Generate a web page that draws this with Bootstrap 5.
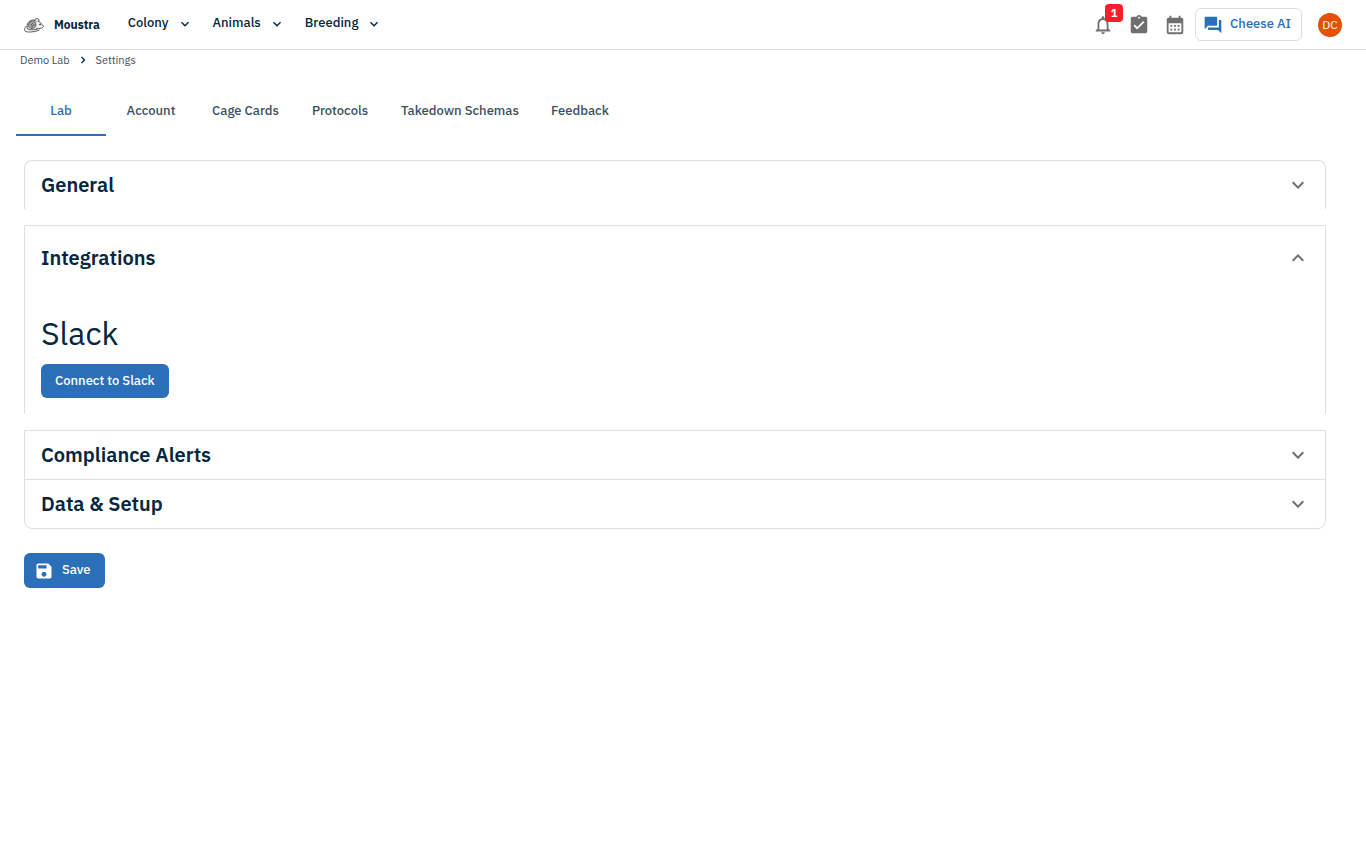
<!DOCTYPE html>
<html lang="en">
<head>
<meta charset="utf-8">
<meta name="viewport" content="width=device-width, initial-scale=1">
<title>Moustra – Settings</title>
<link href="https://cdn.jsdelivr.net/npm/bootstrap@5.3.0/dist/css/bootstrap.min.css" rel="stylesheet">
<style>
  :root { --ink: #05263f; --ink-soft: #3a4f62; --brand: #2a6fb7; --line: #dcdfe3; --icon: #6f6f6f; }
  body { font-family: "IBM Plex Sans", "Noto Sans", sans-serif; font-size: 13px; line-height: 20px; color: var(--ink); background: #fff; }
  svg { display: block; flex: none; }
  .topbar { height: 50px; border-bottom: 1px solid #dcdcdc; }
  .brand-link { gap: 10px; margin-right: 28px; }
  .brand-name { font-size: 12px; font-weight: 700; color: var(--ink); }
  .menus { gap: 20px; }
  .menu-btn { font-size: 13px; font-weight: 500; line-height: 20px; color: var(--ink); gap: 8px; }
  .menu-btn svg { margin-top: 2px; }
  .tool-btn { color: var(--icon); width: 36px; height: 36px; }
  .count-badge { top: -3px; left: 20px; width: 18px; height: 18px; border-radius: 4px; background: #fa1e2d; color: #fff; font-size: 11px; font-weight: 700; line-height: 18px; }
  .ai-btn { height: 33px; border: 1px solid #d8dee5; border-radius: 6px; color: var(--brand); font-size: 13px; line-height: 20px; font-weight: 500; padding: 0 10px 2px 7px; gap: 7px; margin: 0 16px 0 2px; }
  .ai-btn svg { margin-top: 2px; }
  .user-dot { width: 24px; height: 24px; background: #e65100; color: #fff; font-size: 12px; }
  .crumbs { font-size: 11px; line-height: 20px; padding: 0 20px; gap: 8px; }
  .crumbs a { color: var(--ink-soft); }
  .settings-tabs { padding: 0 16px; margin-top: 16px; }
  .settings-tabs .nav-link { min-width: 90px; height: 50px; padding: 2px 16px 0; font-weight: 500; color: var(--ink-soft); background: none; border: 0; border-bottom: 2px solid transparent; }
  .settings-tabs .nav-link.active { color: var(--brand); border-bottom-color: var(--brand); }
  .content-area { padding: 24px 40px 24px 24px; }
  .panel { border: 1px solid var(--line); border-bottom: 0; }
  .panel:first-child { border-radius: 8px 8px 0 0; margin-bottom: 16px; }
  .panel:last-child { border-bottom: 1px solid var(--line); border-radius: 0 0 8px 8px; }
  .panel.opened { margin-bottom: 16px; }
  .panel-toggle { min-height: 48px; padding: 0 15px 0 16px; font-size: 20px; line-height: 30px; font-weight: 600; color: var(--ink); }
  .panel-toggle svg { color: var(--icon); }
  .opened .panel-toggle { min-height: 64px; }
  .panel-content { padding: 24px 16px 16px; }
  .panel-content h3 { font-size: 32px; line-height: 38px; font-weight: 400; margin-bottom: 12px; }
  .solid-btn { background: var(--brand); color: #fff; border-radius: 6px; font-size: 13px; font-weight: 500; line-height: 20px; height: 34px; padding: 0 14px; }
  .save-btn { height: 35px; padding: 0 14px 2px 10px; gap: 8px; margin-top: 24px; }
  .save-btn svg { margin-top: 3px; }
</style>
</head>
<body>
<svg class="d-none">
  <symbol id="chev" viewBox="0 0 24 24"><path d="M7.41 8.59 12 13.17l4.59-4.58L18 10l-6 6-6-6z"/></symbol>
</svg>
<header class="topbar d-flex align-items-center px-4">
  <a href="#" class="brand-link d-flex align-items-center text-decoration-none">
    <svg width="20" height="18" viewBox="0 0 40 36" fill="none" stroke="#4a4a4a" stroke-width="1.800">
      <path fill="#f4f4f4" d="M7 26C4 16 10 8 18 8c3 0 5 1 7 3 5-1 10 3 14 10-1 3-5 4-9 4-6 3-15 4-23 1z"/>
      <path fill="#a8a8a8" stroke="#555" d="M9 19c0-6 4-9 8-9 4 0 7 3 7 8 0 4-3 7-8 7-4 0-7-2-7-6z"/>
      <path d="M14 18c0-3 5-4 6-1 0 3-4 5-6 3"/>
      <path fill="#ddd" d="M22 10c0-4 2-6 5-5s4 4 2 7"/>
      <path d="M5 20C-2 27 1 32 9 32c9 0 15-1 22-4M23 27l4-3"/>
      <circle cx="32" cy="17" r="1.200" fill="#222"/>
    </svg>
    <span class="brand-name">Moustra</span>
  </a>
  <nav class="menus d-flex align-items-center pb-1">
    <button class="menu-btn btn border-0 p-0 d-flex align-items-center" type="button">Colony <svg width="16" height="16" fill="currentColor"><use href="#chev"/></svg></button>
    <button class="menu-btn btn border-0 p-0 d-flex align-items-center" type="button">Animals <svg width="16" height="16" fill="currentColor"><use href="#chev"/></svg></button>
    <button class="menu-btn btn border-0 p-0 d-flex align-items-center" type="button">Breeding <svg width="16" height="16" fill="currentColor"><use href="#chev"/></svg></button>
  </nav>
  <div class="ms-auto d-flex align-items-center">
    <button class="tool-btn btn border-0 p-0 d-flex align-items-center justify-content-center position-relative" type="button" aria-label="Notifications">
      <svg width="22" height="22" viewBox="0 0 24 24" fill="currentColor"><path d="M12 22c1.100 0 2-.9 2-2h-4c0 1.100.9 2 2 2m6-6v-5c0-3.070-1.630-5.640-4.500-6.320V4c0-.83-.67-1.500-1.500-1.500s-1.500.67-1.500 1.500v.68C7.640 5.360 6 7.920 6 11v5l-2 2v1h16v-1zm-2 1H8v-6c0-2.480 1.510-4.500 4-4.500s4 2.020 4 4.500z"/></svg>
      <span class="count-badge position-absolute text-center">1</span>
    </button>
    <button class="tool-btn btn border-0 p-0 d-flex align-items-center justify-content-center" type="button" aria-label="Tasks">
      <svg width="22" height="22" viewBox="0 0 24 24" fill="currentColor"><path d="M19 3h-4.180C14.400 1.840 13.300 1 12 1s-2.400.84-2.820 2H5c-1.100 0-2 .9-2 2v14c0 1.100.9 2 2 2h14c1.100 0 2-.9 2-2V5c0-1.100-.9-2-2-2m-7 0c.55 0 1 .45 1 1s-.45 1-1 1-1-.45-1-1 .45-1 1-1m-2 14-4-4 1.410-1.410L10 14.170l6.590-6.590L18 9z"/></svg>
    </button>
    <button class="tool-btn btn border-0 p-0 d-flex align-items-center justify-content-center" type="button" aria-label="Calendar">
      <svg width="22" height="22" viewBox="0 0 24 24" fill="currentColor"><path fill-rule="evenodd" d="M19 4h-1V2h-2v2H8V2H6v2H5c-1.100 0-2 .9-2 2v14c0 1.100.9 2 2 2h14c1.100 0 2-.9 2-2V6c0-1.100-.9-2-2-2m0 16H5V10h14zM7 12h2v2H7zm4 0h2v2h-2zm4 0h2v2h-2zm-8 4h2v2H7zm4 0h2v2h-2zm4 0h2v2h-2z"/></svg>
    </button>
    <button class="ai-btn btn d-flex align-items-center" type="button">
      <svg width="20" height="20" viewBox="0 0 24 24" fill="currentColor"><path d="M21 6h-2v9H6v2c0 .55.45 1 1 1h11l4 4V7c0-.55-.45-1-1-1m-4 6V3c0-.55-.45-1-1-1H3c-.55 0-1 .45-1 1v14l4-4h10c.55 0 1-.45 1-1"/></svg>
      Cheese AI
    </button>
    <button class="user-dot btn border-0 p-0 rounded-circle d-flex align-items-center justify-content-center" type="button">DC</button>
  </div>
</header>
<nav class="crumbs d-flex align-items-center" aria-label="Breadcrumb">
  <a href="#" class="text-decoration-none">Demo Lab</a>
  <svg width="10" height="10" viewBox="0 0 10 10" fill="none" stroke="currentColor" stroke-width="1.300"><path d="M3.500 2l3 3-3 3"/></svg>
  <a href="#" class="text-decoration-none">Settings</a>
</nav>
<div class="settings-tabs nav" role="tablist">
  <button class="nav-link active" role="tab" aria-selected="true" type="button">Lab</button>
  <button class="nav-link" role="tab" type="button">Account</button>
  <button class="nav-link" role="tab" type="button">Cage Cards</button>
  <button class="nav-link" role="tab" type="button">Protocols</button>
  <button class="nav-link" role="tab" type="button">Takedown Schemas</button>
  <button class="nav-link" role="tab" type="button">Feedback</button>
</div>
<main class="content-area">
  <div>
    <section class="panel">
      <button class="panel-toggle btn border-0 w-100 d-flex align-items-center justify-content-between" type="button" aria-expanded="false">General <svg width="24" height="24" fill="currentColor"><use href="#chev"/></svg></button>
    </section>
    <section class="panel opened">
      <button class="panel-toggle btn border-0 w-100 d-flex align-items-center justify-content-between" type="button" aria-expanded="true">Integrations <svg width="24" height="24" viewBox="0 0 24 24" fill="currentColor"><path d="m12 8-6 6 1.410 1.410L12 10.830l4.590 4.580L18 14z"/></svg></button>
      <div class="panel-content">
        <h3>Slack</h3>
        <button class="solid-btn btn border-0" type="button">Connect to Slack</button>
      </div>
    </section>
    <section class="panel">
      <button class="panel-toggle btn border-0 w-100 d-flex align-items-center justify-content-between" type="button" aria-expanded="false">Compliance Alerts <svg width="24" height="24" fill="currentColor"><use href="#chev"/></svg></button>
    </section>
    <section class="panel">
      <button class="panel-toggle btn border-0 w-100 d-flex align-items-center justify-content-between" type="button" aria-expanded="false">Data &amp; Setup <svg width="24" height="24" fill="currentColor"><use href="#chev"/></svg></button>
    </section>
  </div>
  <button class="solid-btn save-btn btn border-0 d-flex align-items-center" type="button">
    <svg width="20" height="20" viewBox="0 0 24 24" fill="currentColor"><path d="M17 3H5c-1.110 0-2 .9-2 2v14c0 1.100.89 2 2 2h14c1.100 0 2-.9 2-2V7zm-5 16c-1.660 0-3-1.340-3-3s1.340-3 3-3 3 1.340 3 3-1.340 3-3 3m3-10H5V5h10z"/></svg>
    Save
  </button>
</main>
<script src="https://cdn.jsdelivr.net/npm/bootstrap@5.3.0/dist/js/bootstrap.bundle.min.js"></script>
</body>
</html>
